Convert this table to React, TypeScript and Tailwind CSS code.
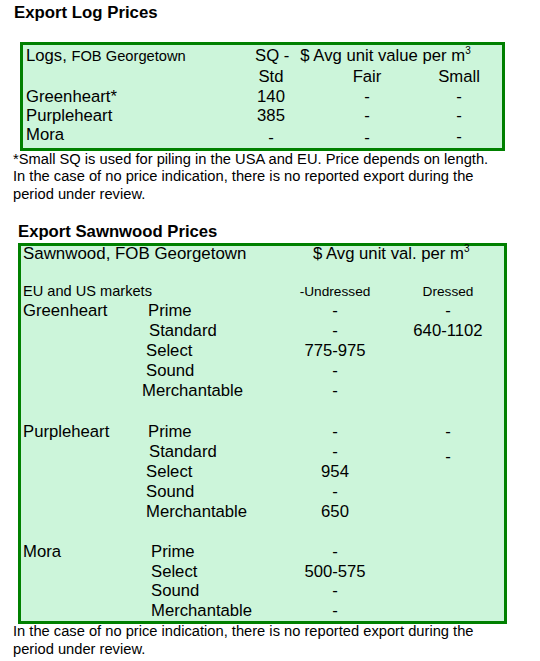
const font = "font-['Liberation_Sans',Arial,sans-serif]";

type LogRow = { name: string; std: string; fair: string; small: string; h: string; low?: boolean };

const logRows: LogRow[] = [
  { name: "Greenheart*", std: "140", fair: "-", small: "-", h: "h-[19.5px]" },
  { name: "Purpleheart", std: "385", fair: "-", small: "-", h: "h-[19px]" },
  { name: "Mora", std: "-", fair: "-", small: "-", h: "h-[20px]", low: true },
];

type SawRow = {
  name?: string;
  grade: string;
  indent: string;
  und?: string;
  dr?: string;
  drLow?: boolean;
  h?: string;
};

const sawGroups: { rows: SawRow[]; top: string }[] = [
  {
    top: "",
    rows: [
      { name: "Greenheart", grade: "Prime", indent: "pl-[6px]", und: "-", dr: "-" },
      { grade: "Standard", indent: "pl-[7px]", und: "-", dr: "640-1102" },
      { grade: "Select", indent: "pl-[4px]", und: "775-975" },
      { grade: "Sound", indent: "pl-[4px]", und: "-" },
      { grade: "Merchantable", indent: "pl-0", und: "-" },
    ],
  },
  {
    top: "mt-[21px]",
    rows: [
      { name: "Purpleheart", grade: "Prime", indent: "pl-[6px]", und: "-", dr: "-" },
      { grade: "Standard", indent: "pl-[7px]", und: "-", dr: "-", drLow: true },
      { grade: "Select", indent: "pl-[4px]", und: "954" },
      { grade: "Sound", indent: "pl-[4px]", und: "-" },
      { grade: "Merchantable", indent: "pl-[4px]", und: "650" },
    ],
  },
  {
    top: "mt-[20px]",
    rows: [
      { name: "Mora", grade: "Prime", indent: "pl-[9px]", und: "-", h: "h-[19.5px]" },
      { grade: "Select", indent: "pl-[9px]", und: "500-575", h: "h-[19.5px]" },
      { grade: "Sound", indent: "pl-[9px]", und: "-", h: "h-[19.5px]" },
      { grade: "Merchantable", indent: "pl-[9px]", und: "-", h: "h-[19.5px]" },
    ],
  },
];

function Cube() {
  return <span className="relative -top-[7px] text-[10px] leading-none">3</span>;
}

function LogTable() {
  return (
    <div className="ml-[20px] mt-[18.5px] w-[485px] border-[3px] border-[#008000] bg-[#ccf5da] pl-[3px] pt-[1px] pb-[2.5px] text-[16.7px] leading-[20px]">
      <div className="flex h-[21.5px] items-start">
        <div className="w-[229px] whitespace-nowrap">
          Logs, <span className="text-[14.7px]">FOB Georgetown</span>
        </div>
        <span>SQ -</span>
        <span className="ml-[11px] whitespace-nowrap">
          $ Avg unit value per m
          <Cube />
        </span>
      </div>
      <div className="flex h-[19.5px] items-start">
        <div className="w-[221px]" />
        <div className="w-[48px] text-center">Std</div>
        <div className="ml-[48px] w-[48px] text-center">Fair</div>
        <div className="ml-[44px] w-[48px] text-center">Small</div>
      </div>
      {logRows.map((r) => (
        <div key={r.name} className={`flex items-start ${r.h}`}>
          <div className="w-[221px]">{r.name}</div>
          <div className={`w-[48px] text-center ${r.low ? "pt-[3px]" : ""}`}>{r.std}</div>
          <div className={`ml-[48px] w-[48px] text-center ${r.low ? "pt-[3px]" : ""}`}>{r.fair}</div>
          <div className={`ml-[44px] w-[48px] text-center ${r.low ? "pt-[2px]" : ""}`}>{r.small}</div>
        </div>
      ))}
    </div>
  );
}

function SawnwoodTable() {
  return (
    <div className="ml-[18px] mt-px w-[489px] border-[3px] border-[#008000] bg-[#ccf5da] pl-[2px] pb-px text-[16.7px] leading-[20px]">
      <div className="-mt-[2px] flex">
        <div className="w-[290px] whitespace-nowrap text-[16.9px]">Sawnwood, FOB Georgetown</div>
        <span className="whitespace-nowrap">
          $ Avg unit val. per m
          <Cube />
        </span>
      </div>
      <div className="mt-[17px] flex h-[20px] items-baseline">
        <div className="w-[267px] whitespace-nowrap text-[14.6px]">EU and US markets</div>
        <div className="w-[90px] text-center text-[13.7px]">-Undressed</div>
        <div className="ml-[23px] w-[90px] text-center text-[13.7px]">Dressed</div>
      </div>
      {sawGroups.map((g, gi) => (
        <div key={gi} className={g.top}>
          {g.rows.map((r) => (
            <div key={r.grade} className={`flex items-start ${r.h ?? "h-[20px]"}`}>
              <div className="w-[119px]">{r.name ?? ""}</div>
              <div className={`w-[148px] ${r.indent}`}>{r.grade}</div>
              <div className="w-[90px] text-center">{r.und ?? ""}</div>
              <div className={`ml-[23px] w-[90px] text-center ${r.drLow ? "pt-[5px]" : ""}`}>{r.dr ?? ""}</div>
            </div>
          ))}
        </div>
      ))}
    </div>
  );
}

export default function App() {
  return (
    <div className={`min-h-[661px] w-[540px] bg-white text-black ${font}`}>
      <h1 className="pl-[14px] pt-[3px] text-[16.8px] font-bold leading-[20px]">Export Log Prices</h1>
      <LogTable />
      <p className="pl-[13px] text-[14.7px] leading-[17.5px]">
        *Small SQ is used for piling in the USA and EU. Price depends on length.
        <br />
        In the case of no price indication, there is no reported export during the
        <br />
        period under review.
      </p>
      <h2 className="mt-[19px] pl-[18px] text-[16.7px] font-bold leading-[20px]">Export Sawnwood Prices</h2>
      <SawnwoodTable />
      <p className="-mt-[2px] pl-[13px] text-[14.7px] leading-[18px]">
        In the case of no price indication, there is no reported export during the
        <br />
        period under review.
      </p>
    </div>
  );
}
